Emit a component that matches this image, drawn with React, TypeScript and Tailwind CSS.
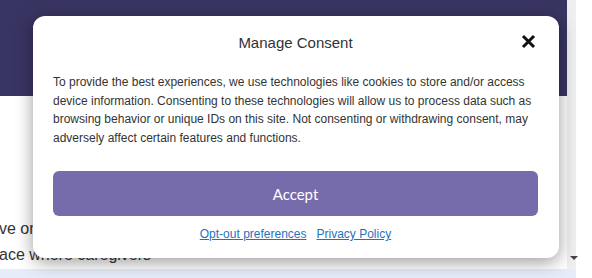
import React from 'react';

const ConsentDialog: React.FC = () => {
  return (
    <div className="absolute left-[33px] top-[16px] w-[526px] h-[242px] bg-white rounded-[12px] shadow-[0_4px_18px_rgba(0,0,0,0.4)] pt-[17px] pl-[20px] pr-[21px]">
      <div className="relative h-[20px] flex items-center justify-center">
        <span className="text-[15px] text-[#333] leading-[20px]">Manage Consent</span>
        <button className="absolute right-[2px] top-[1px] text-[#111]">
          <svg width="15" height="15" viewBox="0 0 15 15">
            <path d="M2 2 L13 13 M13 2 L2 13" stroke="currentColor" strokeWidth="3" strokeLinecap="butt" />
          </svg>
        </button>
      </div>
      <p className="mt-[20px] text-[12px] leading-[18.5px] text-[#333]">
        To provide the best experiences, we use technologies like cookies to store and/or access device
        information. Consenting to these technologies will allow us to process data such as browsing
        behavior or unique IDs on this site. Not consenting or withdrawing consent, may adversely affect
        certain features and functions.
      </p>
      <button className="mt-[24px] w-full h-[45px] rounded-[6px] bg-[#766bab] text-white text-[15px] pt-[2px] font-['Lato',sans-serif]">
        Accept
      </button>
      <div className="mt-[10px] flex justify-center gap-[10px] text-[12px] leading-[16px] text-[#1e73be]">
        <a className="underline">Opt-out preferences</a>
        <a className="underline">Privacy Policy</a>
      </div>
    </div>
  );
};

export default function App() {
  return (
    <div className="relative w-[592px] h-[278px] overflow-hidden bg-white font-['Liberation_Sans',Arial,sans-serif]">
      <div className="flex h-[269px]">
        <div className="w-[567px] flex flex-col">
          <div className="h-[96px] bg-[#393563]" />
          <div className="flex-1 pt-[120px] text-[16px] leading-[26px] text-[#333]">
            <p className="-ml-[1px] whitespace-nowrap">ve on the</p>
            <p className="-ml-[1px] whitespace-nowrap">ace where caregivers</p>
          </div>
        </div>
        <div className="relative w-[9px] bg-[#efefef]">
          <div className="absolute left-[3px] top-[256px] w-0 h-0 border-l-[4px] border-r-[4px] border-t-[4px] border-l-transparent border-r-transparent border-t-[#444]" />
        </div>
      </div>
      <div className="w-[576px] h-[9px] bg-[#e6edf8]" />
      <ConsentDialog />
    </div>
  );
}
